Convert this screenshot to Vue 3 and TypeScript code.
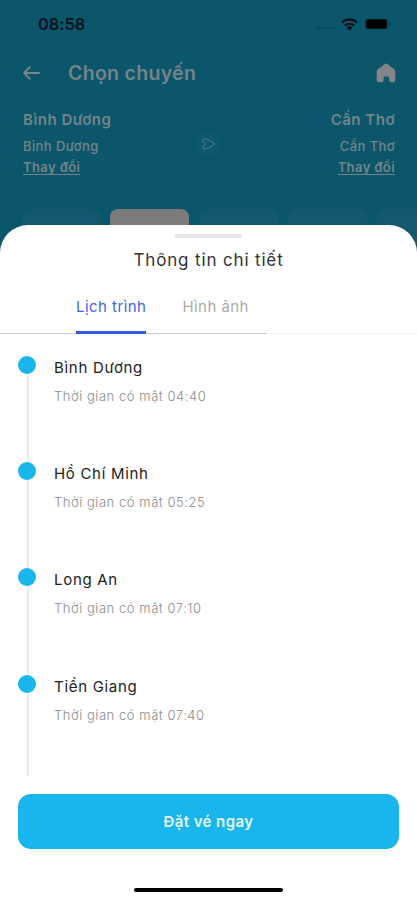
<script setup lang="ts">
interface Stop {
  name: string
  time: string
}

const stops: Stop[] = [
  { name: 'Bình Dương', time: '04:40' },
  { name: 'Hồ Chí Minh', time: '05:25' },
  { name: 'Long An', time: '07:10' },
  { name: 'Tiền Giang', time: '07:40' },
]
const days: number[] = [1, 2, 3, 4, 5]
</script>

<template>
  <main class="screen">
    <div class="backdrop">
      <div class="status">
        <span class="clock">08:58</span>
        <svg class="signal" width="20" height="12" viewBox="0 0 20 12">
          <path d="M1 10h3M6 10h3M11 10h3M16 10h3" stroke="#09475a" stroke-width="1.4" />
        </svg>
        <svg class="wifi" width="17" height="13" viewBox="0 0 17 13" fill="none" stroke="#020c10" stroke-width="2.1">
          <path d="M1 4.6a10.8 10.8 0 0 1 15 0M3.7 7.6a7 7 0 0 1 9.6 0" />
          <path d="M8.5 12.6 5.6 9.7a4.2 4.2 0 0 1 5.8 0z" fill="#020c10" stroke="none" />
        </svg>
        <svg class="battery" width="26" height="12" viewBox="0 0 26 12">
          <rect x="0.3" y="0.8" width="22.4" height="10.4" rx="2" fill="#083846" />
          <rect x="1.3" y="1.5" width="20.4" height="9" rx="1" fill="#000" />
          <path d="M24 4v4q1.5-.6 1.5-2T24 4z" fill="#083846" />
        </svg>
      </div>
      <header class="bar">
        <svg width="18" height="16" viewBox="0 0 18 16" fill="none" stroke="#7d878b" stroke-width="1.9" stroke-linecap="round" stroke-linejoin="round">
          <path d="M17 8H2.2M7.8 2.2 2.1 8l5.7 5.8" />
        </svg>
        <h1>Chọn chuyến</h1>
        <svg class="home" width="20" height="20" viewBox="0 0 20 20">
          <path d="M8.4 1.2Q10 0 11.6 1.2l6.3 4.9Q19.3 7.3 19.3 9v7.4Q19.3 19.3 16.4 19.3H15q-1.8 0-1.8-1.8v-2.2q0-1.7-1.6-1.7H9.2q-1.6 0-1.6 1.7v2.2q0 1.8-1.8 1.8H3.6Q.7 19.3.7 16.4V9q0-1.7 1.4-2.9z" fill="#828487" />
        </svg>
      </header>
      <section class="route">
        <div class="place">
          <strong>Bình Dương</strong>
          <span>Bình Dương</span>
          <a>Thay đổi</a>
        </div>
        <div class="swap">
          <svg width="15" height="14" viewBox="0 0 15 14" fill="none" stroke="#477885" stroke-width="1.1" stroke-linejoin="round">
            <path d="M1.8 3.6Q1.2 1.4 3.6 1.8L8 3.1l4.4 2.6q1.8 1.3 0 2.6L8 10.8l-4.6 1.3Q1.2 12.3 1.9 10.3L4 7z" />
          </svg>
        </div>
        <div class="place right">
          <strong>Cần Thơ</strong>
          <span>Cần Thơ</span>
          <a>Thay đổi</a>
        </div>
      </section>
      <div class="days">
        <i v-for="day in days" :key="day" :class="{ selected: day === 2 }"></i>
      </div>
    </div>
    <section class="sheet">
      <div class="handle"></div>
      <h2>Thông tin chi tiết</h2>
      <nav class="tabs">
        <div class="tab active"><span>Lịch trình</span></div>
        <div class="tab"><span>Hình ảnh</span></div>
      </nav>
      <ol class="stops">
        <li v-for="stop in stops" :key="stop.name">
          <div class="track"><b></b></div>
          <div class="info">
            <h3>{{ stop.name }}</h3>
            <p>Thời gian có mặt {{ stop.time }}</p>
          </div>
        </li>
      </ol>
      <button class="book">Đặt vé ngay</button>
      <div class="home-indicator"></div>
    </section>
  </main>
</template>

<style>
body {
  background: #fff;
}
</style>

<style scoped>
* {
  box-sizing: border-box;
  margin: 0;
  padding: 0;
}
.screen {
  width: 417px;
  height: 900px;
  overflow: hidden;
  background: #0b566b;
  font-family: Inter, "Liberation Sans", sans-serif;
}
.backdrop {
  height: 255px;
  color: #748489;
}
.status {
  display: flex;
  align-items: center;
  height: 48px;
  padding-left: 38px;
}
.clock {
  width: 278px;
  color: #03141a;
  font-size: 16.5px;
  font-weight: 600;
  line-height: 20px;
  letter-spacing: -0.1px;
}
.wifi {
  margin-left: 5px;
}
.battery {
  margin-left: 7px;
}
.bar {
  display: flex;
  align-items: center;
  height: 50px;
  padding: 0 21px 0 22px;
}
.bar h1 {
  margin-left: 28px;
  font-size: 19.5px;
  font-weight: 600;
  letter-spacing: 0.3px;
}
.home {
  margin-left: auto;
}
.route {
  display: flex;
  justify-content: space-between;
  height: 111px;
  padding: 11px 22px 0 23px;
}
.place {
  display: flex;
  flex-direction: column;
  align-items: flex-start;
  width: 120px;
}
.place.right {
  align-items: flex-end;
}
.place strong {
  font-size: 15px;
  font-weight: 600;
  line-height: 22px;
  letter-spacing: 0.5px;
}
.place span {
  margin-top: 6px;
  font-size: 13px;
  font-weight: 500;
  line-height: 18px;
  letter-spacing: 0.4px;
}
.place a {
  margin-top: 6px;
  border-bottom: 1px solid #748489;
  font-size: 13px;
  font-weight: 600;
  line-height: 13px;
  letter-spacing: 0.4px;
}
.swap {
  display: grid;
  place-items: center;
  width: 24px;
  height: 24px;
  margin: 23px 2px 0 0;
  border-radius: 50%;
  background: #0f586d;
}
.days {
  display: flex;
  gap: 10px;
  width: 417px;
  height: 46px;
  padding-left: 22px;
  overflow: hidden;
}
.days i {
  flex: 0 0 79px;
  height: 60px;
  border-radius: 8px;
  background: #13586c;
}
.days .selected {
  margin-left: -1px;
  background: #7b7b7b;
}
.sheet {
  position: relative;
  display: flex;
  flex-direction: column;
  height: 675px;
  margin-top: -30px;
  border-radius: 28px 28px 0 0;
  background: #fff;
}
.handle {
  width: 67px;
  height: 4px;
  margin: 9px auto 0;
  border-radius: 2px;
  background: #e6e6e6;
}
h2 {
  margin-top: 10px;
  color: #333;
  font-size: 17px;
  font-weight: 400;
  line-height: 24px;
  letter-spacing: 0.85px;
  text-align: center;
}
.tabs {
  display: flex;
  gap: 36px;
  height: 62px;
  padding-left: 76px;
  background: linear-gradient(90deg, #c9c9c9 266px, #f2f2f2 266px) 0 61px / 100% 1px no-repeat;
}
.tab {
  display: flex;
  padding-top: 25px;
  color: #aaa;
  font-size: 15px;
  line-height: 20px;
  letter-spacing: 0.45px;
}
.tab.active {
  color: #4362e9;
  border-bottom: 3px solid #3659e3;
  border-radius: 2px 2px 0 0;
}
.stops {
  height: 442px;
  padding: 21.5px 18px 0;
  list-style: none;
}
.stops li {
  display: flex;
  height: 106.4px;
}
.stops li:last-child {
  height: 101px;
}
.track {
  display: flex;
  justify-content: center;
  width: 18px;
  background: linear-gradient(#d3e9fa, #d3e9fa) 9px 0 / 1.5px 100% no-repeat;
}
.track b {
  width: 18px;
  height: 18px;
  border-radius: 50%;
  background: #19b5ed;
}
.info {
  padding: 1px 0 0 18px;
}
h3 {
  color: #222;
  font-size: 15px;
  font-weight: 400;
  line-height: 22px;
  letter-spacing: 0.7px;
}
p {
  margin-top: 8px;
  color: #8b8b8b;
  font-size: 13px;
  font-weight: 300;
  line-height: 18px;
  letter-spacing: 0.54px;
}
.book {
  flex: none;
  width: 381px;
  height: 55px;
  margin: 18px auto 0;
  padding-bottom: 1px;
  border: 0;
  border-radius: 13px;
  background: #19b5ed;
  color: #e4f7fe;
  font: 600 15px Inter, sans-serif;
  letter-spacing: 0.4px;
}
.home-indicator {
  width: 149px;
  height: 4px;
  margin: 39px auto 0;
  border-radius: 3px;
  background: #000;
}
</style>
